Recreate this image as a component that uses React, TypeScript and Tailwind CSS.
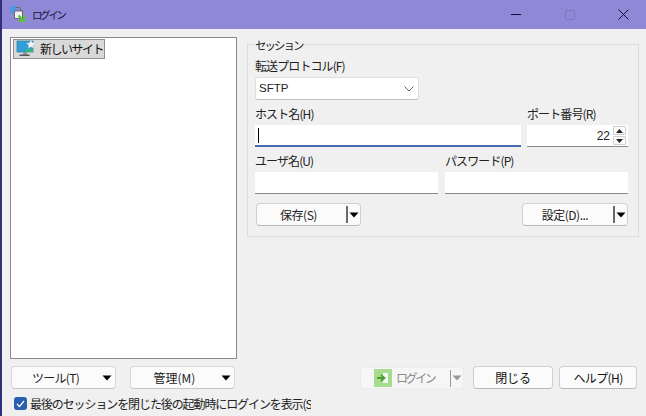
import React from "react";

const font = { fontFamily: '"Noto Sans CJK JP", "Liberation Sans", sans-serif' };

function Caret({ color = "#000" }: { color?: string }) {
  return (
    <svg width="10" height="6" viewBox="0 0 10 6" className="shrink-0">
      <path d="M0.5 0.5H9.5L5 5.5Z" fill={color} />
    </svg>
  );
}

function SplitButton({ label, width }: { label: string; width: string }) {
  return (
    <div className={`${width} h-[23px] flex items-center bg-[#fbfbfb] border border-[#d0d0d0] border-b-[#b8b8b8] rounded-[4px]`}>
      <span className="flex-1 text-center text-[12px] tracking-[-0.5px] text-[#222] pr-[6px]">{label}</span>
      <span className="w-[2px] h-[17px] bg-[#6a6a6a]" />
      <span className="w-[12px] flex justify-center"><Caret /></span>
    </div>
  );
}

function MenuButton({ label, text }: { label: string; text: string }) {
  return (
    <div className="w-[105px] h-[23px] flex items-center bg-[#fbfbfb] border border-[#d8d8d8] border-b-[#c4c4c4] rounded-[4px]">
      <span className={`flex-1 text-center text-[12px] text-[#222] ${text}`}>{label}</span>
      <span className="mr-[1px] w-[14px] flex justify-center"><Caret /></span>
    </div>
  );
}

function Field({ width, children, focused }: { width: string; children?: React.ReactNode; focused?: boolean }) {
  return (
    <div className={`${width} h-[22px] bg-white flex items-center ${focused ? "border-b-2 border-[#4a68ac]" : "border-b border-[#8a8a8a]"}`}>
      {children}
    </div>
  );
}

function Label({ children, width }: { children: React.ReactNode; width?: string }) {
  return <div className={`${width ?? ""} h-[16px] leading-[16px] text-[12px] tracking-[-0.9px] text-[#222] whitespace-nowrap`}>{children}</div>;
}

export default function App() {
  return (
    <div style={font} className="w-[646px] h-[416px] overflow-hidden bg-[#f0f0f0] border-l-2 border-[#2f2f7a] flex flex-col">
      <div className="h-[29px] shrink-0 bg-[#8e88d6] flex items-center">
        <svg width="17" height="17" viewBox="0 0 17 17" className="ml-[8px] mr-[5px]">
          <path d="M0.5 0.5h6v3H3.5v4H0.5z" fill="#3d9be8" />
          <path d="M6 1.5h3.5l2 3" stroke="#666" strokeWidth="1" fill="none" />
          <rect x="4.5" y="5" width="8" height="7.5" fill="#f2f2f2" stroke="#555" strokeWidth="0.8" />
          <path d="M8.5 9.5l4 4M14 9.5v5.5H8.5" stroke="#58c230" strokeWidth="2.2" fill="none" />
        </svg>
        <span className="text-[10.5px] text-[#16163a] tracking-[-2.4px]">ログイン</span>
        <div className="ml-auto flex items-center">
          <svg width="10" height="2" viewBox="0 0 10 2" className="mr-[44px]"><rect width="10" height="1" fill="#10103a" /></svg>
          <svg width="10" height="10" viewBox="0 0 10 10" className="mr-[43px]"><rect x="0.5" y="0.5" width="9" height="9" rx="1" fill="none" stroke="#7a76bb" /></svg>
          <svg width="11" height="11" viewBox="0 0 11 11" className="mr-[17px]"><path d="M0.5 0.5L10.5 10.5M10.5 0.5L0.5 10.5" stroke="#10103a" strokeWidth="1" /></svg>
        </div>
      </div>

      <div className="flex flex-1 min-h-0 pl-[8px] pt-[8px]">
        <div className="w-[227px] h-[322px] bg-white border border-[#8a8a8a] pl-[2px] pt-[1px]">
          <div className="w-[92px] h-[20px] bg-[#d9d9d9] border border-[#8f8f8f] flex items-center">
            <svg width="20" height="18" viewBox="0 0 20 18" className="ml-[2px] mr-[4px] shrink-0">
              <rect x="1" y="1" width="16" height="11" fill="#2f9fd8" stroke="#2a7a9e" strokeWidth="0.7" />
              <rect x="10" y="9" width="7" height="3" fill="#35b57a" />
              <rect x="7" y="12.5" width="4" height="2" fill="#8a8a8a" />
              <rect x="3.5" y="14.5" width="10" height="1.5" fill="#555" />
              <path d="M15 0l1.4 2.8 3 .4-2.2 2 .6 3-2.8-1.5-2.8 1.5.6-3-2.2-2 3-.4z" fill="#f4f4f4" stroke="#b5c4cc" strokeWidth="0.4" />
            </svg>
            <span className="text-[12px] text-[#111] tracking-[-1.5px] whitespace-nowrap">新しいサイト</span>
          </div>
        </div>

        <div className="ml-[10px] mt-[7px] w-[392px] h-[193px] border border-[#dcdcdc] relative pl-[7px] pt-[13px]">
          <span className="absolute left-[6px] top-[-8px] px-[1px] bg-[#f0f0f0] text-[11.5px] leading-[16px] tracking-[-2px] text-[#222]">セッション</span>
          <Label>転送プロトコル(F)</Label>
          <div className="mt-[3px] w-[164px] h-[23px] bg-white border border-[#dedede] border-b-[#c0c0c0] rounded-[3px] flex items-center justify-between pl-[3px] pr-[4px]">
            <span className="text-[11.5px] text-[#222]" style={{ fontFamily: '"Liberation Sans", sans-serif' }}>SFTP</span>
            <svg width="10" height="6" viewBox="0 0 10 6"><path d="M0.5 0.5L5 5L9.5 0.5" fill="none" stroke="#555" strokeWidth="0.9" /></svg>
          </div>
          <div className="mt-[6px] flex">
            <Label width="w-[272px]">ホスト名(H)</Label>
            <Label>ポート番号(R)</Label>
          </div>
          <div className="mt-[3px] flex items-start">
            <Field width="w-[266px]" focused><span className="ml-[3px] w-[1px] h-[15px] bg-black" /></Field>
            <div className="ml-[6px] w-[101px] h-[22px] bg-white border-b border-[#8a8a8a] flex items-center justify-end">
              <span className="text-[12px] text-[#222] mr-[3px]" style={{ fontFamily: '"Liberation Sans", sans-serif' }}>22</span>
              <div className="w-[13px] mr-[2px] flex flex-col gap-[1px]">
                <div className="h-[9px] bg-[#fbfbfb] border border-[#cfcfcf] rounded-[1px] flex items-center justify-center"><svg width="7" height="4" viewBox="0 0 7 4"><path d="M0 4L3.5 0L7 4Z" fill="#222" /></svg></div>
                <div className="h-[9px] bg-[#fbfbfb] border border-[#cfcfcf] rounded-[1px] flex items-center justify-center"><svg width="7" height="4" viewBox="0 0 7 4"><path d="M0 0L3.5 4L7 0Z" fill="#222" /></svg></div>
              </div>
            </div>
          </div>
          <div className="mt-[6px] flex">
            <Label width="w-[190px]">ユーザ名(U)</Label>
            <Label>パスワード(P)</Label>
          </div>
          <div className="mt-[3px] flex gap-[7px]">
            <Field width="w-[183px]" />
            <Field width="w-[183px]" />
          </div>
          <div className="mt-[9px] ml-[1px] flex justify-between w-[372px]">
            <SplitButton label="保存(S)" width="w-[105px]" />
            <SplitButton label="設定(D)..." width="w-[106px]" />
          </div>
        </div>
      </div>

      <div className="h-[30px] shrink-0 flex items-start pl-[9px]">
        <div className="flex gap-[14px]">
          <MenuButton label="ツール(T)" text="pr-[1px] tracking-[-0.7px]" />
          <MenuButton label="管理(M)" text="pr-[1px] tracking-[0px]" />
        </div>
        <div className="ml-[125px] mt-[1px] w-[104px] h-[22px] bg-[#f6f6f6] border border-[#ececec] rounded-[4px] flex items-center">
          <svg width="18" height="18" viewBox="0 0 18 18" className="ml-[13px] mr-[4px] shrink-0">
            <rect width="18" height="18" fill="#a6dc8e" />
            <path d="M9 4h5v10H9z" fill="#f4f8f0" />
            <path d="M3 9h7M7 6l3.5 3L7 12" stroke="#4f9e3a" strokeWidth="1.8" fill="none" />
          </svg>
          <span className="text-[12px] text-[#8a8a8a] tracking-[-2.4px] whitespace-nowrap">ログイン</span>
          <span className="ml-auto w-[1px] h-[17px] bg-[#9a9a9a]" />
          <span className="w-[12px] flex justify-center"><Caret color="#9a9a9a" /></span>
        </div>
        <div className="ml-[9px] w-[80px] h-[23px] bg-[#fbfbfb] border border-[#cfcfcf] border-b-[#b8b8b8] rounded-[4px] flex items-center justify-center text-[12px] text-[#111] tracking-[-0.2px]">閉じる</div>
        <div className="ml-[6px] w-[78px] h-[23px] bg-[#fbfbfb] border border-[#cfcfcf] border-b-[#b8b8b8] rounded-[4px] flex items-center justify-center text-[12px] text-[#111] tracking-[-0.6px]">ヘルプ(H)</div>
      </div>

      <div className="h-[20px] shrink-0 flex items-start pl-[12px]">
        <span className="mt-[1px] w-[13px] h-[13px] rounded-[3px] bg-[#2a5fb0] flex items-center justify-center shrink-0">
          <svg width="9" height="8" viewBox="0 0 9 8"><path d="M1 4l2.5 2.5L8 1" stroke="#fff" strokeWidth="1.2" fill="none" /></svg>
        </span>
        <div className="ml-[3px] w-[281px] overflow-hidden whitespace-nowrap text-[12px] leading-[16px] tracking-[-1.1px] text-[#222]">最後のセッションを閉じた後の起動時にログインを表示(S)</div>
      </div>
    </div>
  );
}
